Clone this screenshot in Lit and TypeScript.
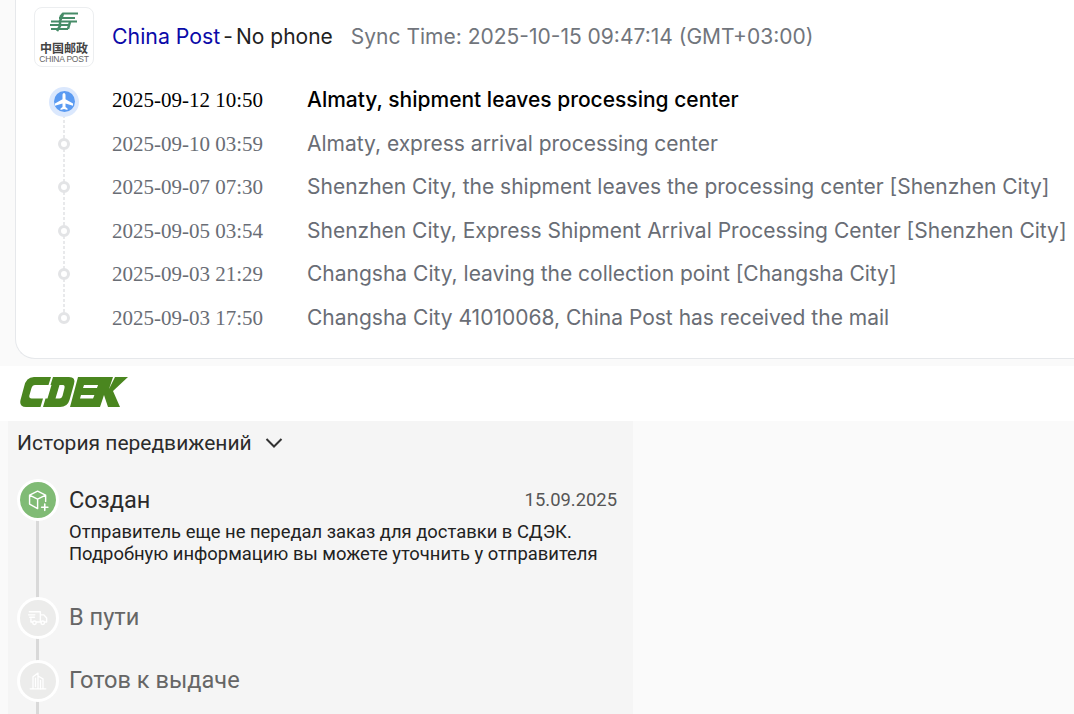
import { LitElement, html, css, svg } from "lit";
import { customElement } from "lit/decorators.js";

const rows = [
  ["2025-09-12 10:50", "Almaty, shipment leaves processing center"],
  ["2025-09-10 03:59", "Almaty, express arrival processing center"],
  ["2025-09-07 07:30", "Shenzhen City, the shipment leaves the processing center [Shenzhen City]"],
  ["2025-09-05 03:54", "Shenzhen City, Express Shipment Arrival Processing Center [Shenzhen City]"],
  ["2025-09-03 21:29", "Changsha City, leaving the collection point [Changsha City]"],
  ["2025-09-03 17:50", "Changsha City 41010068, China Post has received the mail"],
];

const plane = svg`<svg width="20" height="20" viewBox="0 0 20 20"><path fill="#fff" d="M10 1c.9 0 1.500 1 1.500 2.200v4l7.500 4.300v2.300l-7.500-2.200v3.400l2 1.500V18L10 17.100 6.500 18v-1.500l2-1.500v-3.400L1 13.800v-2.300l7.500-4.300v-4C8.500 2 9.100 1 10 1z"/></svg>`;

const cube = svg`<svg width="25" height="25" viewBox="0 0 28 28" fill="none" stroke="#fff" stroke-width="1.600" stroke-linejoin="round" stroke-linecap="round"><path d="M13 3.500 22 8v7M13 3.500 4 8v10l9 5M4 8l9 4.500L22 8M13 12.500V23"/><path d="M21 18v7M17.500 21.500h7" stroke-width="1.800"/></svg>`;

const truck = svg`<svg width="22" height="22" viewBox="0 0 28 28" fill="none" stroke="#fff" stroke-width="1.800" stroke-linejoin="round" stroke-linecap="round"><path d="M3 6h14v13h-5M7 19H5v-4M17 10h4.500l3.500 4v5h-2.500M17 19h1"/><path d="M2 10h8M3.500 13h6"/><circle cx="9.500" cy="20" r="2.200"/><circle cx="20" cy="20" r="2.200"/></svg>`;

const building = svg`<svg width="20" height="20" viewBox="0 0 28 28" fill="none" stroke="#fff" stroke-width="1.800" stroke-linejoin="round" stroke-linecap="round"><path d="M3 25h22M7 25V8l7-5v22M14 7l7 4v14"/><path d="M10.500 10v12M17.500 13v12"/></svg>`;

@customElement("app-root")
export class AppRoot extends LitElement {
  static styles = css`
    :host {
      display: block;
      width: 1074px;
      height: 714px;
      overflow: hidden;
      background: #fafafa;
    }
    .card {
      margin-left: 15px;
      height: 359px;
      box-sizing: border-box;
      background: #fff;
      border-left: 1px solid #e6e8eb;
      border-bottom: 1px solid #e6e8eb;
      border-bottom-left-radius: 20px;
      padding: 7px 0 0 18px;
      font-family: Inter, sans-serif;
    }
    .head {
      display: flex;
      align-items: center;
      height: 60px;
      padding-bottom: 2px;
      box-sizing: border-box;
      font-size: 21px;
    }
    .logo {
      width: 60px;
      height: 60px;
      box-sizing: border-box;
      border: 1px solid #eceef0;
      border-radius: 8px;
      display: flex;
      flex-direction: column;
      align-items: center;
      padding-top: 4px;
      background: #fff;
      margin: 2px 18px 0 0;
      flex: none;
    }
    .mark {
      display: block;
      margin-bottom: 10px;
    }
    .cn {
      font-family: "Noto Sans CJK SC", sans-serif;
      font-size: 12px;
      font-weight: 700;
      line-height: 12px;
      color: #444;
      white-space: nowrap;
    }
    .en {
      font-family: "Liberation Sans", sans-serif;
      font-size: 8.500px;
      line-height: 8px;
      letter-spacing: -0.2px;
      margin-top: 1px;
      color: #666;
      white-space: nowrap;
    }
    .name {
      color: #0a0aa8;
      font-size: 21.300px;
    }
    .dash {
      color: #222;
      margin: 0 3px 0 3px;
    }
    .phone {
      color: #222;
    }
    .sync {
      color: #71757c;
      margin-left: 18px;
    }
    .list {
      padding-top: 11.500px;
    }
    .row {
      display: flex;
      align-items: center;
      height: 43.500px;
      position: relative;
      color: #696d75;
      font-size: 21px;
      white-space: nowrap;
    }
    .row.on {
      color: #000;
    }
    .dot-col {
      width: 60px;
      margin-right: 18px;
      display: flex;
      justify-content: center;
      align-items: center;
      flex: none;
    }
    .dot {
      width: 12px;
      height: 12px;
      box-sizing: border-box;
      border-radius: 50%;
      border: 3px solid #e3e4e6;
      background: #fff;
      position: relative;
      z-index: 1;
    }
    .big {
      width: 30px;
      height: 30px;
      margin-top: 3px;
      border-radius: 50%;
      background: #dbe8fd;
      display: flex;
      align-items: center;
      justify-content: center;
      position: relative;
      z-index: 1;
    }
    .big span {
      width: 21px;
      height: 21px;
      border-radius: 50%;
      background: #5b9bf2;
      display: flex;
      align-items: center;
      justify-content: center;
    }
    .row:not(:last-child)::after {
      content: "";
      position: absolute;
      left: 29px;
      top: 50%;
      width: 2px;
      height: 43.500px;
      background: repeating-linear-gradient(to bottom, #e8e9eb 0 3px, transparent 3px 5px);
    }
    .date {
      width: 195px;
      flex: none;
      font-family: "Liberation Serif", serif;
      font-size: 21px;
      margin-top: 0.600px;
    }
    .txt {
      margin-bottom: 0.600px;
    }
    .row.on .txt {
      font-weight: 500;
    }
    .brand {
      margin-top: 7px;
      height: 55px;
      background: #fff;
      display: flex;
      align-items: center;
      padding: 0 0 3px 20px;
      box-sizing: border-box;
    }
    .panel {
      margin-left: 8px;
      width: 625px;
      height: 293px;
      background: #f5f5f5;
      font-family: Roboto, sans-serif;
      overflow: hidden;
      box-sizing: border-box;
    }
    .hist {
      display: flex;
      align-items: center;
      gap: 12px;
      height: 44px;
      padding-left: 9px;
      font-size: 21px;
      color: #2b2b2b;
    }
    .steps {
      padding: 14px 16px 0 9px;
    }
    .step {
      display: flex;
      position: relative;
    }
    .step.s1 { height: 117.500px; }
    .step.s2 { height: 63px; }
    .step.s3 { height: 63px; }
    .step::after {
      content: "";
      position: absolute;
      left: 18.500px;
      top: 20px;
      width: 3.500px;
      height: 130px;
      background: #d9d9d9;
    }
    .circle {
      width: 36px;
      height: 36px;
      border: 3px solid #fff;
      border-radius: 50%;
      background: #ececeb;
      flex: none;
      display: flex;
      align-items: center;
      justify-content: center;
      position: relative;
      z-index: 1;
      margin-right: 10px;
    }
    .circle.ok {
      background: #80bb75;
    }
    .body {
      flex: 1;
      min-width: 0;
    }
    .top {
      display: flex;
      justify-content: space-between;
      align-items: center;
      height: 42px;
    }
    .title {
      font-size: 23.600px;
      color: #666;
    }
    .s2 .title, .s3 .title {
      margin-bottom: 2px;
    }
    .ok + .body .title {
      color: #2b2b2b;
    }
    .when {
      font-size: 18.400px;
      color: #555;
      margin-bottom: 2px;
    }
    .desc {
      font-size: 18.400px;
      line-height: 22px;
      color: #222;
      white-space: nowrap;
    }
  `;

  render() {
    return html`
      <section class="card">
        <div class="head">
          <div class="logo">
            <svg class="mark" width="28" height="20" viewBox="0 0 28 20" fill="none" stroke="#478c68" stroke-width="2.200">
              <path d="M10 5 L13 1.500 H28 M9 6 H25 M1 9.500 H27 M0 13 H20 M1 17 H18" />
              <path d="M13 2 L10 9 V14 L7 19 M20 10 L18 17" stroke-width="2.500" />
            </svg>
            <div class="cn">中国邮政</div>
            <div class="en">CHINA POST</div>
          </div>
          <span class="name">China Post</span><span class="dash">-</span><span class="phone">No phone</span>
          <span class="sync">Sync Time: 2025-10-15 09:47:14 (GMT+03:00)</span>
        </div>
        <div class="list">
          ${rows.map(
            (r, i) => html`
              <div class="row ${i === 0 ? "on" : ""}">
                <div class="dot-col">
                  ${i === 0
                    ? html`<div class="big"><span>${plane}</span></div>`
                    : html`<div class="dot"></div>`}
                </div>
                <div class="date">${r[0]}</div>
                <div class="txt">${r[1]}</div>
              </div>
            `
          )}
        </div>
      </section>
      <div class="brand">
        <svg width="108" height="30" viewBox="0 0 108 30" fill="#4a861f" fill-rule="evenodd">
          <path d="M14 0H31L28.500 8H15Q12.500 8 11.500 11L9.500 18Q8.500 21.500 11.500 21.500H23L20.500 30H6Q-1 30 .5 23L4 10Q6 0 14 0Z" />
          <path d="M33 0H49Q56 0 54 7L49.500 23Q47.500 30 40 30H23L25.500 21.500H27.500L31.500 8H30.500ZM39.500 8L35.500 21.500H39.500Q41.500 21.500 42.500 19L44.500 11Q45 8 43 8Z" />
          <path d="M58 0H82L79.500 8H64L63 11H78L76 18H61L60 21.500H74L71.500 30H50Z" />
          <path d="M81 0H93L89 12L95 0H108L93 14L100 30H88L84 18L80 30H70Z" />
        </svg>
      </div>
      <section class="panel">
        <div class="hist">
          <span>История передвижений</span>
          <svg width="20" height="20" viewBox="0 0 20 20" fill="none" stroke="#333" stroke-width="2">
            <path d="M2.500 6 10 13.500 17.500 6" />
          </svg>
        </div>
        <div class="steps">
          <div class="step s1">
            <div class="circle ok">${cube}</div>
            <div class="body">
              <div class="top"><span class="title">Создан</span><span class="when">15.09.2025</span></div>
              <div class="desc">
                Отправитель еще не передал заказ для доставки в СДЭК.<br />Подробную информацию вы можете
                уточнить у отправителя
              </div>
            </div>
          </div>
          <div class="step s2">
            <div class="circle">${truck}</div>
            <div class="body"><div class="top"><span class="title">В пути</span></div></div>
          </div>
          <div class="step s3">
            <div class="circle">${building}</div>
            <div class="body"><div class="top"><span class="title">Готов к выдаче</span></div></div>
          </div>
        </div>
      </section>
    `;
  }
}
